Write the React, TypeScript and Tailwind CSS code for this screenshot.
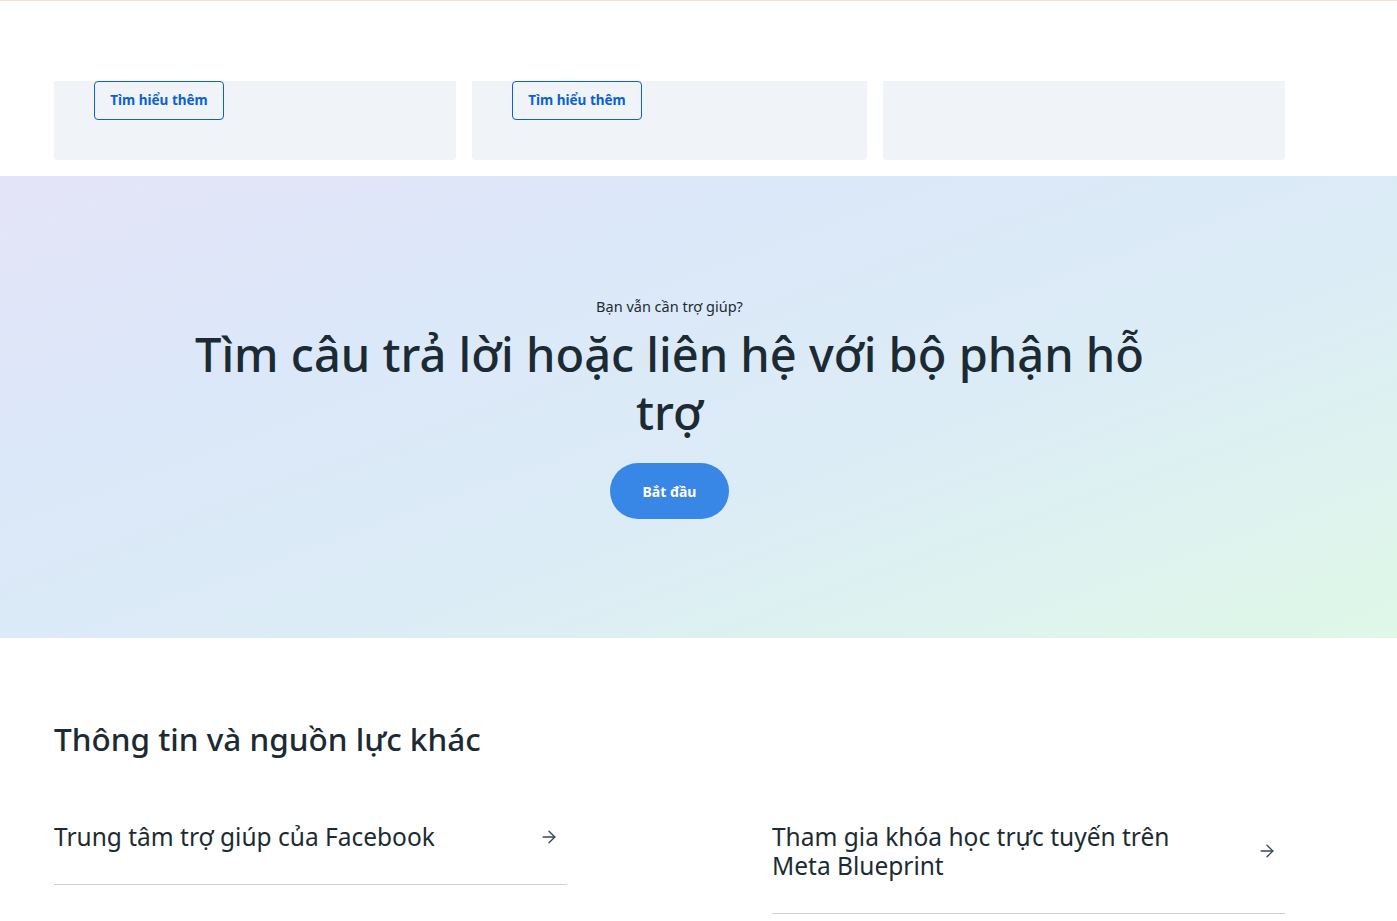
import { ArrowRight } from "lucide-react";

const cards = [
  { w: "w-[402px]", cta: true },
  { w: "w-[395px]", cta: true },
  { w: "w-[402px]", cta: false },
];

const links = [
  { label: "Trung tâm trợ giúp của Facebook" },
  { label: "Tham gia khóa học trực tuyến trên Meta Blueprint" },
];

export default function App() {
  return (
    <main className="min-h-screen bg-white text-[#1c2b33] font-['Noto_Sans',sans-serif] overflow-hidden">
      <div className="h-px bg-[#f3dfd3]" />

      {/* Cards tail */}
      <div className="pt-[80px] pb-4 ml-[54px] w-[1231px]">
        <div className="flex gap-4">
          {cards.map((c, i) => (
            <div key={i} className={`${c.w} h-[79px] bg-[#f0f3f7] rounded-b-[4px] px-10`}>
              {c.cta && (
                <button className="h-[39px] w-[130px] border border-[#0a61d4] rounded-[4px] text-[#0a61d4] text-[13.5px] font-bold">
                  Tìm hiểu thêm
                </button>
              )}
            </div>
          ))}
        </div>
      </div>

      {/* Help banner */}
      <section className="h-[462px] bg-[linear-gradient(160deg,#e5e4f8_0%,#dbe8f9_30%,#dcecf6_60%,#dff8e8_100%)]">
        <div className="ml-[54px] w-[1231px] flex flex-col items-center pt-[121px]">
          <p className="text-[14.5px] leading-[18px] text-[#1c2b33]">Bạn vẫn cần trợ giúp?</p>
          <h2 className="mt-[10px] max-w-[960px] text-center text-[47px] leading-[58px] font-medium text-[#1c2b33]">
            Tìm câu trả lời hoặc liên hệ với bộ phận hỗ trợ
          </h2>
          <button className="mt-[22px] h-[56px] w-[119px] rounded-full bg-[#3886e6] text-white text-[14px] font-bold">
            Bắt đầu
          </button>
        </div>
      </section>

      {/* Other resources */}
      <section className="ml-[54px] w-[1231px] pt-[81px]">
        <h3 className="text-[31.5px] leading-[40px] font-medium">Thông tin và nguồn lực khác</h3>
        <div className="mt-[63px] flex gap-[205px] items-start">
          {links.map((l) => (
            <a key={l.label} href="#" className="w-[513px] flex items-center justify-between pb-[33px] border-b border-[#cbd2d9]">
              <span className="max-w-[430px] text-[24.5px] leading-[29px]">{l.label}</span>
              <ArrowRight className="w-5 h-5 mr-2 text-[#344854]" strokeWidth={1.6} />
            </a>
          ))}
        </div>
      </section>
      <div className="mt-[7px] h-px bg-[#ecdcd9]" />
    </main>
  );
}
